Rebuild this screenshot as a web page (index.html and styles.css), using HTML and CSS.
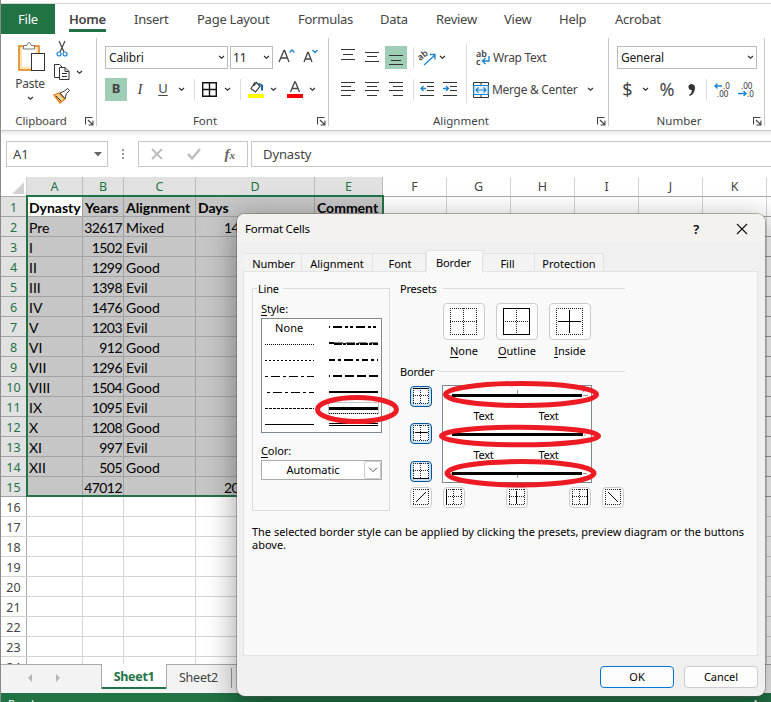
FILE: index.html
```html
<!DOCTYPE html>
<html lang="en">
<head>
<meta charset="utf-8">
<title>Format Cells</title>
<link rel="stylesheet" href="styles.css">
</head>
<body>
<svg class="defs" width="0" height="0">
  <defs>
    <symbol id="chev" viewBox="0 0 7 5"><path d="M1 1l2.5 2.3L6 1" fill="none" stroke="#333" stroke-width="1.2"/></symbol>
    <symbol id="launch" viewBox="0 0 9 9"><path d="M.5 7.5v-7h7M3 3l4.500 4.500M7.900 3.500v4.500H3.500" fill="none" stroke="#444" stroke-width="1.1"/></symbol>
    <symbol id="cross" viewBox="0 0 16 16"><rect x=".5" y=".5" width="15" height="15" fill="#fff"/><path d="M0 .5h16M0 15.500h16M.5 0v16M15.500 0v16M0 7.500h16M7.500 0v16" fill="none" stroke="#222" stroke-dasharray="1 1"/></symbol>
  </defs>
</svg>
<div class="window">
  <nav class="tabs">
    <span class="file">File</span><span class="home">Home</span><span class="t-insert">Insert</span><span class="t-page">Page Layout</span><span class="t-form">Formulas</span><span class="t-data">Data</span><span class="t-review">Review</span><span class="t-view">View</span><span class="t-help">Help</span><span>Acrobat</span>
  </nav>
  <div class="ribbon">
    <section class="group clipboard">
      <div class="clip-body">
        <div class="paste">
          <svg width="30" height="34" viewBox="0 0 30 34"><rect x="2" y="5" width="20" height="24" fill="#fbe3b0" stroke="#e07f16" stroke-width="1.500"/><rect x="5" y="8" width="14" height="18" fill="#fff"/><path d="M6.500 8V4.500h3.300Q10.500 1.500 12 1.500t2.300 3h3.200V8z" fill="#fff" stroke="#777"/><rect x="14.500" y="12.500" width="13" height="17" fill="#fff" stroke="#333"/></svg>
          <span>Paste</span>
          <svg class="chev"><use href="#chev"/></svg>
        </div>
        <div class="clip-side">
          <svg width="12" height="16" viewBox="0 0 12 16"><path d="M3 0l5 11M9 0L4 11" stroke="#444" stroke-width="1.200"/><circle cx="3" cy="13" r="2" fill="none" stroke="#1b84d0" stroke-width="1.200"/><circle cx="9" cy="13" r="2" fill="none" stroke="#1b84d0" stroke-width="1.200"/></svg>
          <div class="copy"><svg width="18" height="17" viewBox="0 0 18 17"><path d="M6 13.500H1.500V.5h5l3 3M6.500 3.500h5.500l4 4v8h-9.500zM12 3.500v4h4M9 9.500h5M9 12.500h5" fill="none" stroke="#333"/></svg><svg class="chev"><use href="#chev"/></svg></div>
          <svg width="17" height="16" viewBox="0 0 17 16"><path d="M1 7l5-2 6 6-5 4z" fill="#fbd08a" stroke="#e07f16" stroke-width="1.300"/><path d="M3 8l5 5M7 5l4.500-2 3-2.500 2 2-3 3-1.500 5z" fill="#fff" stroke="#333"/></svg>
        </div>
      </div>
      <footer><span>Clipboard</span><svg class="launch"><use href="#launch"/></svg></footer>
    </section>
    <section class="group font">
      <div class="row1">
        <div class="combo family"><span>Calibri</span><svg class="chev"><use href="#chev"/></svg></div>
        <div class="combo size"><span>11</span><svg class="chev"><use href="#chev"/></svg></div>
        <svg width="24" height="23" viewBox="-1 0 24 23"><path d="M3 16L8 4.500h.6L13 16M4.600 12h7" fill="none" stroke="#444" stroke-width="1.300"/><path d="M13.500 6.500L16 4l2.500 2.500" fill="none" stroke="#1b84d0" stroke-width="1.400"/></svg>
        <svg width="24" height="23" viewBox="2 0 24 23"><path d="M5 16l3.700-9.500h.6L13 16M6.300 13h5.600" fill="none" stroke="#444" stroke-width="1.300"/><path d="M13.500 4L16 6.500 18.500 4" fill="none" stroke="#1b84d0" stroke-width="1.400"/></svg>
      </div>
      <div class="row2">
        <span class="bold">B</span><span class="italic">I</span><span class="under"><u>U</u></span>
        <i class="slot w16"><svg class="chev"><use href="#chev"/></svg></i><i class="sep"></i>
        <i class="slot w19"><svg width="15" height="15" viewBox="0 0 15 15"><path d="M.7.7h13.600v13.600H.7zM7.500 1v13M1 7.500h13" fill="none" stroke="#111" stroke-width="1.400"/></svg></i>
        <i class="slot w16"><svg class="chev"><use href="#chev"/></svg></i><i class="sep"></i>
        <i class="slot w20"><svg width="16" height="17" viewBox="0 0 16 17"><path d="M7 1L3 7.500l4.500 3.500L12 5.500 8.500 1.500 5.500 5" fill="#fff" stroke="#444" stroke-width="1.200"/><path d="M10.500 2.500l3.500 2v5" fill="none" stroke="#1669a8" stroke-width="2"/><path d="M0 13h16v4H0z" fill="#ff0"/></svg></i>
        <i class="slot w14"><svg class="chev"><use href="#chev"/></svg></i>
        <i class="slot w30"><svg width="16" height="17" viewBox="0 0 16 17"><path d="M3.500 11L7.700 1h.7l4.100 10M5 7.500h6" fill="none" stroke="#444" stroke-width="1.300"/><path d="M0 13h16v4H0z" fill="red"/></svg></i>
        <i class="slot w6"><svg class="chev"><use href="#chev"/></svg></i>
      </div>
      <footer><span>Font</span><svg class="launch"><use href="#launch"/></svg></footer>
    </section>
    <section class="group align">
      <div class="align-body">
        <div class="align-left">
          <div class="line">
            <i class="slot w24"><svg width="14" height="23"><path d="M0 3.500h14M2 8.500h10M0 13.500h14" stroke="#333"/></svg></i>
            <i class="slot w24"><svg width="14" height="23"><path d="M0 6.500h14M2 10.500h10M0 15.500h14" stroke="#333"/></svg></i>
            <i class="slot w24 on"><svg width="14" height="23"><path d="M0 9.500h14M2 14.500h10M0 18.500h14" stroke="#333"/></svg></i>
            <i class="sep"></i>
            <i class="slot w16"><svg width="16" height="17" viewBox="0 0 16 17"><text x="0" y="9" transform="rotate(-38 5 9)" class="ab">ab</text><path d="M5 16L15.500 6.500M11 5.500h5v5" fill="none" stroke="#1b84d0" stroke-width="1.300"/></svg></i>
            <i class="slot w14"><svg class="chev"><use href="#chev"/></svg></i>
          </div>
          <div class="line">
            <i class="slot w24"><svg width="14" height="23"><path d="M0 4.500h14M0 8.500h10M0 12.500h14M0 17.500h10" stroke="#333"/></svg></i>
            <i class="slot w24"><svg width="14" height="23"><path d="M0 4.500h14M2 8.500h10M0 12.500h14M2 17.500h10" stroke="#333"/></svg></i>
            <i class="slot w24"><svg width="14" height="23"><path d="M0 4.500h14M4 8.500h10M0 12.500h14M4 17.500h10" stroke="#333"/></svg></i>
            <i class="sep"></i>
            <i class="slot w16"><svg width="14" height="23"><path d="M0 4.500h14M7 8.500h7M7 12.500h7M0 17.500h14" stroke="#333"/><path d="M6 10.500H1M3.500 8L1 10.500 3.500 13" fill="none" stroke="#1b84d0" stroke-width="1.300"/></svg></i>
            <i class="slot w30"><svg width="14" height="23"><path d="M0 4.500h14M7 8.500h7M7 12.500h7M0 17.500h14" stroke="#333"/><path d="M0 10.500h5M3 8l2.500 2.500L3 13" fill="none" stroke="#1b84d0" stroke-width="1.300"/></svg></i>
          </div>
        </div>
        <div class="align-right">
          <div class="line wrap"><svg width="15" height="18" viewBox="0 0 15 18"><text x="0" y="8" class="ab">ab</text><text x="0" y="16" class="ab">c</text><path d="M13 7v5H7M9.500 9L6.500 12l3 3" fill="none" stroke="#1b84d0" stroke-width="1.400"/></svg><span>Wrap Text</span></div>
          <div class="line merge"><svg width="16" height="16" viewBox="0 0 16 16"><path d="M.5.5h15v15H.5zM8 .5v3M8 12.500v3" fill="#fff" stroke="#333"/><path d="M.7 3.500h14.600v9H.7z" fill="#e6f3fb" stroke="#1b84d0" stroke-width="1.200"/><path d="M3 8h10M5.500 5.500L3 8l2.500 2.500M10.500 5.500L13 8l-2.500 2.500" fill="none" stroke="#1b84d0" stroke-width="1.200"/></svg><span>Merge &amp; Center</span><svg class="chev"><use href="#chev"/></svg></div>
        </div>
      </div>
      <footer><span>Alignment</span><svg class="launch"><use href="#launch"/></svg></footer>
    </section>
    <section class="group number">
      <div class="row1"><div class="combo general"><span>General</span><svg class="chev"><use href="#chev"/></svg></div></div>
      <div class="row2">
        <span class="sym w20">$</span><i class="slot w16"><svg class="chev"><use href="#chev"/></svg></i><span class="sym w28">%</span>
        <i class="slot w20"><svg width="9" height="14" viewBox="0 0 9 14"><path d="M4 1a3 3 0 1 0 1 6Q5 10 2 12l1 1Q8 10 8 5 8 1 4 1z" fill="#333"/></svg></i><i class="sep"></i>
        <i class="slot w20"><svg width="17" height="18" viewBox="0 0 17 18"><text x="9" y="8" class="dec">.0</text><text x="3" y="16" class="dec">.00</text><path d="M8 5H1M3.500 2.500L1 5l2.500 2.500" fill="none" stroke="#1b84d0" stroke-width="1.300"/></svg></i>
        <i class="slot w28"><svg width="17" height="18" viewBox="0 0 17 18"><text x="3" y="8" class="dec">.00</text><text x="9" y="16" class="dec">.0</text><path d="M0 12.500h8M5.500 10L8 12.500 5.500 15" fill="none" stroke="#1b84d0" stroke-width="1.300"/></svg></i>
      </div>
      <footer><span>Number</span><svg class="launch"><use href="#launch"/></svg></footer>
    </section>
  </div>
  <div class="formula">
    <div class="namebox"><span>A1</span><svg width="8" height="5"><path d="M0 0h8L4 4.500z" fill="#666"/></svg></div>
    <svg class="dots" width="3" height="11"><path d="M0 0h2v2H0zM0 4h2v2H0zM0 8h2v2H0z" fill="#999"/></svg>
    <div class="fx"><svg width="12" height="12"><path d="M1 1l10 10M11 1L1 11" stroke="#bbb" stroke-width="1.800"/></svg><svg width="14" height="12"><path d="M1 6l4 4.500L13 1" fill="none" stroke="#bbb" stroke-width="2.200"/></svg><span>f<small>x</small></span></div>
    <div class="value">Dynasty</div>
  </div>
  <main class="sheet">
    <div class="r head"><b><svg width="12" height="12"><path d="M12 0v12H0z" fill="#d2d2d2"/></svg></b><span class="s">A</span><span class="s">B</span><span class="s">C</span><span class="s">D</span><span class="s">E</span><span>F</span><span>G</span><span>H</span><span>I</span><span>J</span><span>K</span></div>
    <div class="selection">
      <div class="r title"><b>1</b><span class="active">Dynasty</span><span>Years</span><span>Alignment</span><span>Days</span><span>Comment</span></div>
      <div class="r"><b>2</b><span>Pre</span><span>32617</span><span>Mixed</span><span class="days">14</span><span></span></div>
      <div class="r"><b>3</b><span>I</span><span>1502</span><span>Evil</span><span></span><span></span></div>
      <div class="r"><b>4</b><span>II</span><span>1299</span><span>Good</span><span></span><span></span></div>
      <div class="r"><b>5</b><span>III</span><span>1398</span><span>Evil</span><span></span><span></span></div>
      <div class="r"><b>6</b><span>IV</span><span>1476</span><span>Good</span><span></span><span></span></div>
      <div class="r"><b>7</b><span>V</span><span>1203</span><span>Evil</span><span></span><span></span></div>
      <div class="r"><b>8</b><span>VI</span><span>912</span><span>Good</span><span></span><span></span></div>
      <div class="r"><b>9</b><span>VII</span><span>1296</span><span>Evil</span><span></span><span></span></div>
      <div class="r"><b>10</b><span>VIII</span><span>1504</span><span>Good</span><span></span><span></span></div>
      <div class="r"><b>11</b><span>IX</span><span>1095</span><span>Evil</span><span></span><span></span></div>
      <div class="r"><b>12</b><span>X</span><span>1208</span><span>Good</span><span></span><span></span></div>
      <div class="r"><b>13</b><span>XI</span><span>997</span><span>Evil</span><span></span><span></span></div>
      <div class="r"><b>14</b><span>XII</span><span>505</span><span>Good</span><span></span><span></span></div>
      <div class="r"><b>15</b><span></span><span>47012</span><span></span><span class="days">20</span><span></span></div>
      <div class="outline"></div>
    </div>
    <div class="r"><b>16</b></div><div class="r"><b>17</b></div><div class="r"><b>18</b></div><div class="r"><b>19</b></div><div class="r"><b>20</b></div><div class="r"><b>21</b></div><div class="r"><b>22</b></div><div class="r"><b>23</b></div><div class="r"><b>24</b></div>
  </main>
  <div class="sheettabs"><svg width="34" height="9"><path d="M5 0v8L1 4zM29 0v8l4-4z" fill="#b5b5b5"/></svg><span class="current">Sheet1</span><span class="other">Sheet2</span></div>
  <div class="status"><span>Ready</span><span>Average</span></div>
</div>

<div class="dialog">
  <header><span>Format Cells</span><i class="q">?</i><svg width="12" height="12"><path d="M1 1l10 10M11 1L1 11" stroke="#111" stroke-width="1.100"/></svg></header>
  <div class="dtabs"><span class="d1">Number</span><span class="d2">Alignment</span><span class="d3">Font</span><span class="d4">Border</span><span class="d5">Fill</span><span class="d6">Protection</span></div>
  <div class="panel">
    <div class="cols">
      <div class="linebox">
        <span class="legend">Line</span>
        <label><u>S</u>tyle:</label>
        <div class="styles">
          <div class="none">None</div>
          <svg width="119" height="113" viewBox="262 319 119 113" fill="none" stroke="#000">
            <path d="M265 344.500h49" stroke-dasharray="1 1"/><path d="M265 360.500h49" stroke-dasharray="2 2"/><path d="M265 376.500h49" stroke-dasharray="3 3 9 3"/><path d="M267 392.500h47" stroke-dasharray="3 3 9 3"/><path d="M265 408.500h49" stroke-dasharray="3 1"/><path d="M265 424.500h49"/>
            <path d="M329 327h49" stroke-width="2" stroke-dasharray="1 3 9 3 3 2 3 3 9 3 3 2 3 9"/><path d="M329 343h5M334 344h44" stroke-width="2" stroke-dasharray="8 1 3 1"/><path d="M334 343h44" stroke-dasharray="9 3"/><path d="M329 360h49" stroke-width="2" stroke-dasharray="6 3 3 3 9 3 3 3"/><path d="M329 376h49" stroke-width="2" stroke-dasharray="1 3 9 3 9 3 9 3 9 9"/><path d="M329 392h49" stroke-width="2"/>
            <path d="M329 408.500h49" stroke-width="3"/><path d="M328.500 402.500h50v11h-50z" stroke="#888" stroke-dasharray="1 1"/><path d="M329 413.500h49" stroke-dasharray="1 1"/><path d="M329 423.500h49M329 425.500h49"/>
          </svg>
        </div>
        <label class="color"><u>C</u>olor:</label>
        <div class="auto"><span>Automatic</span><i><svg width="10" height="6"><path d="M1 .7l4 4 4-4" fill="none" stroke="#555"/></svg></i></div>
      </div>
      <div class="right">
        <div class="heading"><span>Presets</span><i></i></div>
        <div class="presets">
          <div><i><svg width="27" height="27"><rect x=".5" y=".5" width="26" height="26" fill="#fff"/><path d="M0 .5h27M0 26.500h27M.5 0v27M26.500 0v27M0 13.500h27M13.500 0v27" stroke="#222" stroke-dasharray="1 1"/></svg></i><span><u>N</u>one</span></div>
          <div><i><svg width="27" height="27"><rect x=".5" y=".5" width="26" height="26" fill="#fff" stroke="#000"/><path d="M2 13.500h24M13.500 2v24" stroke="#222" stroke-dasharray="1 1"/></svg></i><span><u>O</u>utline</span></div>
          <div><i><svg width="27" height="27"><rect x=".5" y=".5" width="26" height="26" fill="#fff"/><path d="M0 .5h27M0 26.500h27M.5 0v27M26.500 0v27" stroke="#222" stroke-dasharray="1 1"/><path d="M2 13.500h23M13.500 2v23" stroke="#000"/></svg></i><span><u>I</u>nside</span></div>
        </div>
        <div class="heading second"><span>Border</span><i></i></div>
        <div class="borders">
          <div class="vbtns">
            <i class="bb sel"><svg width="16" height="16"><use href="#cross" width="16" height="16"/><path d="M0 .5h16" stroke="#000"/></svg></i>
            <i class="bb sel mid"><svg width="16" height="16"><use href="#cross" width="16" height="16"/><path d="M2 7.500h12" stroke="#000"/></svg></i>
            <i class="bb sel"><svg width="16" height="16"><use href="#cross" width="16" height="16"/><path d="M0 15.500h16" stroke="#000"/></svg></i>
          </div>
          <div class="preview">
            <svg width="148" height="96" viewBox="443 386 148 96"><path d="M452 395.500h130M452 434.500h131M452 473.500h130" stroke="#000" stroke-width="3"/><path d="M517.500 390v4M517.500 475v3M583.500 387v5M583 395.500h5M583 473.500h4M584 435h2M449 395.500h3M449 473.500h3" stroke="#999"/></svg>
            <div class="texts"><span>Text</span><span>Text</span><span>Text</span><span>Text</span></div>
          </div>
        </div>
        <div class="hbtns">
          <i class="bb"><svg width="16" height="16"><path d="M0 .5h16M0 15.500h16M.5 0v16M15.500 0v16" stroke="#222" stroke-dasharray="1 1"/><path d="M3 13L13 3" stroke="#000"/></svg></i>
          <i class="bb b2"><svg width="16" height="16"><use href="#cross" width="16" height="16"/><path d="M.5 0v16" stroke="#000"/></svg></i>
          <i class="bb b3"><svg width="16" height="16"><use href="#cross" width="16" height="16"/><path d="M7.500 2v12" stroke="#000"/></svg></i>
          <i class="bb b3"><svg width="16" height="16"><use href="#cross" width="16" height="16"/><path d="M15.500 0v16" stroke="#000"/></svg></i>
          <i class="bb b2"><svg width="16" height="16"><path d="M0 .5h16M0 15.500h16M.5 0v16M15.500 0v16" stroke="#222" stroke-dasharray="1 1"/><path d="M3 3l10 10" stroke="#000"/></svg></i>
        </div>
      </div>
    </div>
    <p>The selected border style can be applied by clicking the presets, preview diagram or the buttons<br>above.</p>
  </div>
  <div class="actions"><span class="ok">OK</span><span>Cancel</span></div>
  <svg class="marks" width="528" height="482" viewBox="237 214 528 482" fill="none" stroke="#ed1c24" stroke-width="5">
    <ellipse cx="357" cy="409.500" rx="39.500" ry="12"/><ellipse cx="521" cy="394.500" rx="75.500" ry="11"/><ellipse cx="520" cy="436" rx="78.500" ry="8.800"/><ellipse cx="520.500" cy="473.300" rx="73.500" ry="11.700"/>
  </svg>
</div>
</body>
</html>
```
FILE: styles.css
```css
* { box-sizing: border-box; }
body { margin: 0; width: 771px; height: 702px; overflow: hidden; position: relative; background: #fff; font-family: "Noto Sans", sans-serif; font-size: 12px; color: #444; }
svg { display: block; flex: none; overflow: visible; }
i { font-style: normal; }
u { text-underline-offset: 2px; }
.defs { position: absolute; }
.chev { width: 7px; height: 5px; }
.launch { width: 9px; height: 9px; }
.window { width: 771px; height: 702px; border-left: 1px solid #8a8a8a; display: flex; flex-direction: column; overflow: hidden; }

.tabs { flex: none; margin-top: 3px; height: 33px; border-top: 1px solid #d8d8d8; display: flex; font-size: 13px; letter-spacing: -0.25px; white-space: nowrap; }
.tabs span { height: 30px; line-height: 31px; }
.tabs .file { width: 54px; background: #217346; color: #fff; text-align: center; margin-right: 14px; }
.tabs .home { width: 37px; margin-right: 28px; height: 28px; font-weight: 600; border-bottom: 3px solid #217346; letter-spacing: -0.3px; }
.t-insert { width: 63px; } .t-page { width: 101px; } .t-form { width: 82px; } .t-data { width: 56px; } .t-review { width: 68px; } .t-view { width: 55px; } .t-help { width: 56px; }

.ribbon { flex: none; height: 95px; border-bottom: 1px solid #c8c8c8; padding-top: 2px; display: flex; }
.group { position: relative; height: 88px; border-right: 1px solid #c8c8c8; display: flex; flex-direction: column; }
.group footer { margin-top: auto; height: 10px; padding-right: 2px; display: flex; align-items: center; line-height: 14px; font-size: 11.5px; }
.group footer span { flex: 1; text-align: center; }
.clipboard { width: 96px; } .font { width: 232px; } .align { width: 280px; } .number { width: 156px; }
.group.clipboard footer span { padding-right: 4px; letter-spacing: -0.1px; }
.group.font footer span { padding-right: 4px; }
.group.align footer span, .group.number footer span { padding-right: 4px; }
.row1, .row2, .line { display: flex; align-items: center; height: 23px; }
.row1 { margin: 8px 0 9px 8px; gap: 2px; }
.row2 { margin-left: 8px; }
.clip-body { display: flex; padding: 2px 0 0 13px; }
.paste { width: 32px; display: flex; flex-direction: column; align-items: center; line-height: 16px; letter-spacing: -0.3px; }
.paste svg:first-child { margin: 1px 0 1px 4px; }
.paste .chev { margin-top: 4px; }
.clip-side { margin: 1px 0 0 7px; display: flex; flex-direction: column; gap: 7px; }
.clip-side > svg:first-child { margin-left: 3px; }
.copy { display: flex; align-items: center; gap: 5px; }
.combo { height: 23px; border: 1px solid #bbb; padding: 0 2px 0 3px; display: flex; align-items: center; justify-content: space-between; color: #222; letter-spacing: -0.2px; }
.family { width: 123px; } .size { width: 43px; } .general { width: 140px; }
.size { padding-left: 2px; }
.slot { display: flex; height: 23px; align-items: center; justify-content: center; flex: none; }
.w6 { width: 5px; } .w14 { width: 14px; } .w16 { width: 16px; } .w19 { width: 19px; } .w20 { width: 20px; } .w24 { width: 24px; } .w28 { width: 28px; } .w30 { width: 30px; }
.sep { width: 11px; height: 21px; flex: none; background: linear-gradient(#dcdcdc, #dcdcdc) 5px 0 / 1px 21px no-repeat; }
.bold { width: 22px; height: 23px; line-height: 21px; background: #9fcdb5; font-weight: 700; font-size: 13px; text-align: center; }
.italic { width: 26px; text-align: center; font: italic 15px "Liberation Serif", serif; }
.under { width: 20px; text-align: center; font-size: 13px; line-height: 20px; height: 23px; }
.align-body { display: flex; padding-top: 6px; }
.align-left { width: 138px; height: 59px; padding: 2px 0 0 7px; border-right: 1px solid #dcdcdc; }
.align-left .line + .line, .align-right .line + .line { margin-top: 9px; }
.on { background: linear-gradient(#9fcdb5, #9fcdb5) 1px 0 / 22px 23px no-repeat; }
.align-right { padding: 2px 0 0 6px; letter-spacing: -0.3px; white-space: nowrap; }
.wrap { padding-left: 3px; gap: 2px; }
.merge { gap: 3px; }
.merge .chev { margin-left: 7px; }
.ab { font: 600 9px "Noto Sans", sans-serif; fill: #444; letter-spacing: 0; }
.dec { font: 8px "Noto Sans", sans-serif; fill: #333; }
.sym { font-size: 18px; line-height: 23px; text-align: center; }
.number .sym.w20 { padding-left: 1px; }

.formula { flex: none; height: 46px; padding: 10px 0 10px 5px; display: flex; align-items: center; background: linear-gradient(#e9e9e9, #fff 5px); font-size: 13px; }
.namebox, .fx, .value { height: 26px; border: 1px solid #c8c8c8; background: #fff; display: flex; align-items: center; }
.namebox { width: 102px; padding: 0 5px 0 6px; justify-content: space-between; }
.dots { margin: 0 13px 0 14px; }
.fx { width: 110px; justify-content: space-between; padding: 0 12px; }
.fx span { font: italic bold 15px "Liberation Serif", serif; color: #666; }
.fx small { font-size: 11px; }
.value { margin-left: 3px; flex: 1; padding-left: 11px; border-right: 0; letter-spacing: -0.1px; }

.sheet { flex: none; height: 487px; overflow: hidden; }
.r { display: grid; grid-template-columns: 26px 56px 41px 72px 119px 68px repeat(6, 64px); height: 20px; line-height: 21px; font-size: 14px; font-family: Lato, sans-serif; color: #000; border-bottom: 1px solid #d4d4d4; background: repeating-linear-gradient(90deg, transparent 0 63px, #d4d4d4 63px 64px) 382px 0 no-repeat, linear-gradient(90deg, transparent 81px, #d4d4d4 81px 82px, transparent 82px 122px, #d4d4d4 122px 123px, transparent 123px 194px, #d4d4d4 194px 195px, transparent 195px 313px, #d4d4d4 313px 314px, transparent 314px 381px, #d4d4d4 381px 382px, transparent 382px); }
.r b { border-right: 1px solid #ababab; text-align: center; font: 12.5px/21px "Noto Sans", sans-serif; height: 19px; color: #444; background: #fff; }
.r span { overflow: hidden; white-space: nowrap; height: 19px; }
.head { height: 20px; border-bottom-color: #ababab; background: none; }
.head b svg { margin: 5px 0 0 11px; }
.head b { border-color: #ccc; }
.head span { font: 12.5px/19px "Noto Sans", sans-serif; text-align: center; color: #444; border-right: 1px solid #d4d4d4; }
.head .s { background: #e1e1e1; color: #217346; border-color: #bcbcbc; }
.selection { position: relative; }
.selection .r { border-bottom-color: #a2a2a2; }
.selection .r b { background: #e1e1e1; color: #217346; }
.selection .r span { background: #c6c6c6; border-right: 1px solid #a2a2a2; padding: 0 2px; }
.selection .r span:nth-child(3) { text-align: right; padding: 0 1px 0 0; letter-spacing: -0.55px; }
.selection .title span, .selection .title span:nth-child(3) { font-weight: 700; text-align: left; padding-left: 2px; letter-spacing: 0; }
.selection .r .active { background: #fff; }
.selection .r .days { padding-left: 28px; letter-spacing: -0.55px; }
.outline { position: absolute; left: 25px; top: -2px; width: 358px; height: 302px; border: 2px solid #217346; }

.sheettabs { flex: none; height: 29px; background: #f3f3f3; border-top: 1px solid #ababab; display: flex; font-size: 12.5px; line-height: 26px; letter-spacing: -0.3px; }
.sheettabs svg { margin: 9px 39px 0 26px; }
.current { margin-top: -1px; width: 66px; height: 25px; background: #fff; border: 1px solid #ababab; border-width: 0 1px; box-shadow: inset 0 -2px #217346; text-align: center; color: #217346; font-weight: 700; }
.other { width: 65px; height: 20px; margin-top: 3px; line-height: 19px; border-right: 1px solid #999; padding-left: 12px; letter-spacing: -0.25px; }
.sheettabs .current { margin-left: 1px; }
.status { height: 9px; background: #217346; color: #fff; display: flex; justify-content: space-between; padding-left: 7px; font-size: 11px; line-height: 16px; overflow: hidden; }
.status span { padding-top: 3px; }
.status span:last-child { width: 19px; overflow: hidden; }

.dialog { position: absolute; left: 237px; top: 214px; width: 528px; height: 482px; border-radius: 8px; background: #f0f0f0; box-shadow: 0 0 0 1px rgba(90,90,90,.45), 0 8px 28px 4px rgba(0,0,0,.33); font-size: 11px; color: #000; display: flex; flex-direction: column; }
.dialog header { flex: none; height: 29px; background: #f3f2ee; border-radius: 8px 8px 0 0; display: flex; align-items: center; padding: 0 17px 0 8px; font-size: 11.5px; letter-spacing: -0.2px; }
.q { margin: 0 37px 0 auto; font-size: 13px; font-weight: 600; }
.dtabs { flex: none; height: 29px; padding: 10px 0 0 7px; display: flex; text-align: center; line-height: 20px; }
.dtabs span { height: 19px; border: 1px solid #e3e3e3; border-width: 1px 1px 0 0; background: #f3f3f3; }
.d1 { width: 58px; } .d2 { width: 71px; } .d3 { width: 53px; } .d5 { width: 52px; } .d6 { width: 69px; }
.dtabs .d1 { width: 58px; padding-left: 2px; letter-spacing: -0.1px; }
.d3 { padding-left: 2px; }
.dtabs .d4 { width: 57px; margin-top: -3px; height: 23px; line-height: 23px; background: #f9f9f9; border-left-width: 1px; position: relative; padding-right: 2px; letter-spacing: -0.1px; }
.dtabs .d5 { padding-right: 2px; }
.panel { flex: none; height: 385px; width: 515px; margin-left: 6px; margin-top: -1px; border: 1px solid #e3e3e3; background: #f9f9f9; padding: 9px 0 0 8px; }
.cols { display: flex; height: 236px; }
.linebox { margin-top: 7px; width: 138px; height: 223px; border: 1px solid #dcdcdc; padding-left: 8px; }
.legend { display: block; width: 26px; margin: -8px 0 0 -4px; padding-left: 1px; background: #f9f9f9; line-height: 15px; letter-spacing: -0.2px; }
.linebox label { display: block; line-height: 15px; margin-top: 5px; letter-spacing: -0.1px; }
.styles { width: 121px; height: 115px; margin-top: 2px; border: 1px solid #828790; background: #fff; position: relative; }
.none { position: absolute; left: 13px; top: 1px; line-height: 16px; letter-spacing: .1px; }
.linebox .color { margin-top: 10px; }
.auto { margin-top: 2px; width: 121px; height: 20px; border: 1px solid #aaa; background: #fff; display: flex; align-items: center; }
.auto span { flex: 1; text-align: center; line-height: 16px; }
.auto i { width: 17px; height: 18px; border: 1px solid #ccc; border-radius: 2px; display: flex; align-items: center; justify-content: center; }
.right { margin-left: 10px; width: 225px; }
.heading { height: 15px; line-height: 15px; display: flex; align-items: center; gap: 6px; letter-spacing: -0.2px; }
.heading i { flex: 1; height: 1px; background: #dcdcdc; }
.presets { display: flex; gap: 11px; margin: 7px 0 0 43px; text-align: center; line-height: 15px; }
.presets div { width: 42px; white-space: nowrap; }
.presets i { width: 42px; height: 37px; border: 1px solid #ccc; border-radius: 4px; background: #fdfdfd; display: flex; align-items: center; justify-content: center; margin-bottom: 3px; padding-right: 1px; }
.second { margin-top: 6px; }
.borders { display: flex; margin: 6px 0 0 10px; }
.vbtns { display: flex; flex-direction: column; margin-top: 1px; }
.bb { width: 22px; height: 21px; border: 1px solid #ccc; border-radius: 4px; background: #fdfdfd; display: flex; align-items: center; justify-content: center; padding-bottom: 1px; }
.bb.sel { background: #cce4f7; border: 1px solid #005499; }
.mid { margin: 16px 0 17px; }
.preview { position: relative; margin-left: 10px; width: 150px; height: 98px; background: #fff; border: 1px solid #828790; }
.texts { position: absolute; inset: 22px 8px 0 8px; display: grid; grid-template-columns: 65px 65px; grid-auto-rows: 39px; text-align: center; line-height: 15px; letter-spacing: -0.3px; }
.hbtns { display: flex; margin: 4px 0 0 10px; }
.b2 { margin-left: 11px; } .b3 { margin-left: 41px; }
.panel p { margin: 8px 0 0; line-height: 13px; white-space: nowrap; letter-spacing: -0.02px; }
.actions { display: flex; justify-content: flex-end; gap: 10px; padding: 10px 7px 0 0; }
.actions span { width: 74px; height: 22px; line-height: 20px; border: 1px solid #ccc; border-radius: 4px; background: #fdfdfd; text-align: center; }
.actions .ok { border-color: #0078d4; }
.marks { position: absolute; left: 0; top: 0; }
```
